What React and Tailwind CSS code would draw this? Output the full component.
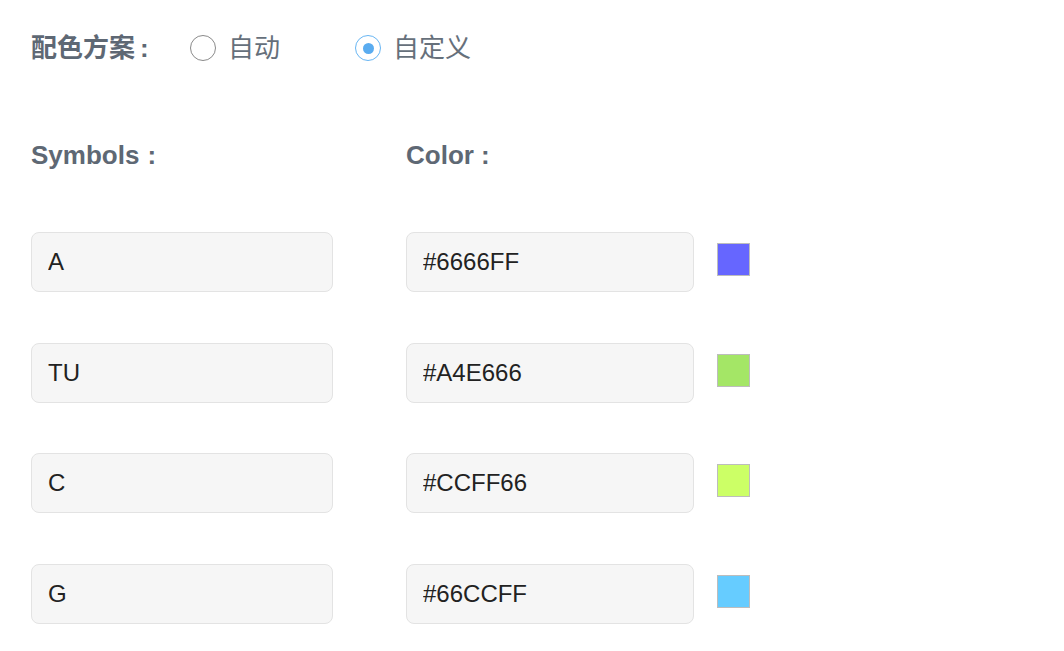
import { useState } from "react";

const rows = [
  { sym: "A", color: "#6666FF" },
  { sym: "TU", color: "#A4E666" },
  { sym: "C", color: "#CCFF66" },
  { sym: "G", color: "#66CCFF" },
];

function Radio({ checked, label, onClick }) {
  return (
    <label onClick={onClick} className="flex items-center gap-[12px] cursor-pointer">
      <span
        className={
          checked
            ? "w-[26px] h-[26px] rounded-full border border-[#68b6f3] flex items-center justify-center"
            : "w-[26px] h-[26px] rounded-full border border-[#8a8a8a] flex items-center justify-center"
        }
      >
        {checked && <span className="w-[11px] h-[11px] rounded-full bg-[#5aacf0]" />}
      </span>
      <span className="text-[26px] leading-none text-[#66707b]">{label}</span>
    </label>
  );
}

export default function App() {
  const [scheme, setScheme] = useState("custom");
  const [data, setData] = useState(rows);

  const update = (i, key, val) => {
    setData(data.map((r, j) => (j === i ? { ...r, [key]: val } : r)));
  };

  return (
    <div
      className="min-h-screen bg-white pl-[31px] pt-[31px]"
      style={{ fontFamily: '"Liberation Sans", "Noto Sans CJK SC", sans-serif' }}
    >
      <div className="flex items-center h-[34px]">
        <span className="text-[26px] font-bold text-[#5e6874] leading-none w-[159px]">
          配色方案<span className="ml-[5px]">:</span>
        </span>
        <Radio checked={scheme === "auto"} label="自动" onClick={() => setScheme("auto")} />
        <div className="w-[75px]" />
        <Radio checked={scheme === "custom"} label="自定义" onClick={() => setScheme("custom")} />
      </div>

      <div className="flex items-center h-[34px] mt-[73px] text-[26px] font-bold text-[#5e6874] leading-none">
        <span className="w-[375px]">Symbols<span className="ml-[8px]">:</span></span>
        <span>Color<span className="ml-[7px]">:</span></span>
      </div>

      <div className="mt-[60px] flex flex-col gap-y-[50.5px]">
        {data.map((r, i) => (
          <div key={i} className="flex items-center">
            <input
              value={r.sym}
              onChange={(e) => update(i, "sym", e.target.value)}
              className="w-[302px] h-[60px] rounded-[8px] border border-[#e3e3e3] bg-[#f6f6f6] px-[16px] text-[24px] text-[#222] outline-none"
            />
            <input
              value={r.color}
              onChange={(e) => update(i, "color", e.target.value)}
              className="ml-[73px] w-[288px] h-[60px] rounded-[8px] border border-[#e3e3e3] bg-[#f6f6f6] px-[16px] text-[24px] text-[#222] outline-none"
            />
            <span
              className="ml-[23px] mb-[5px] w-[33px] h-[33px] border border-[#bdbdbd]"
              style={{ backgroundColor: r.color }}
            />
          </div>
        ))}
      </div>
    </div>
  );
}
